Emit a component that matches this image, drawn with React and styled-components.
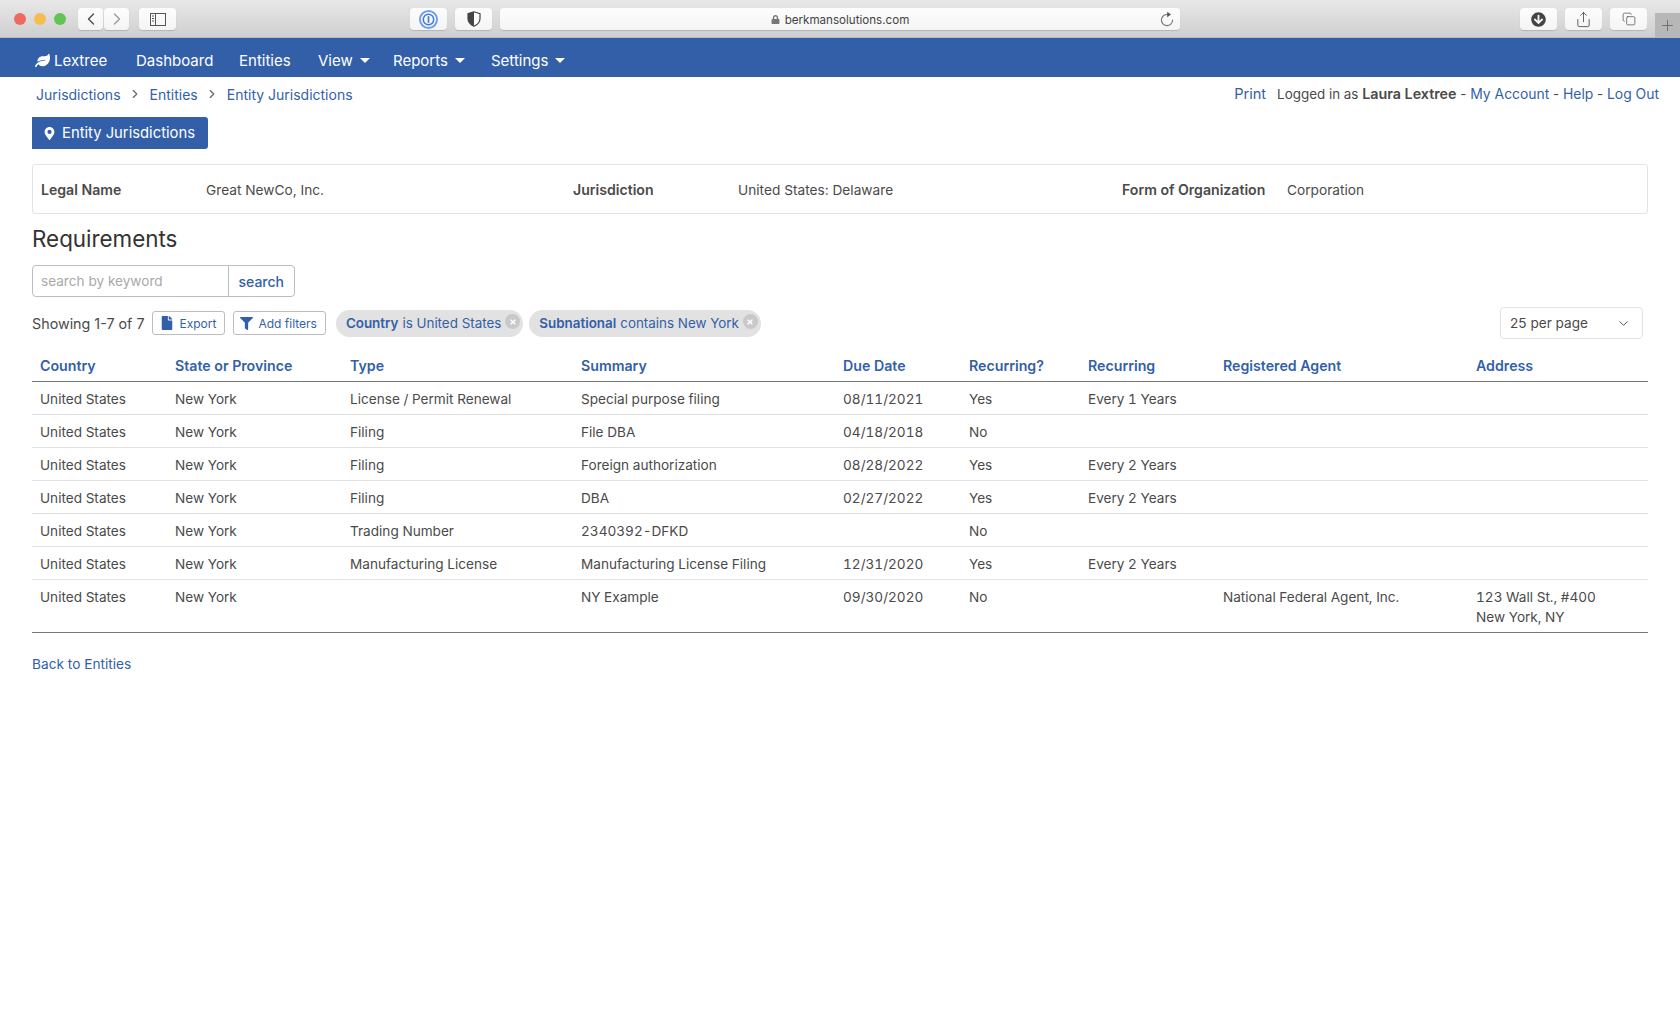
import React from 'react'
import styled, { createGlobalStyle } from 'styled-components'
import { FaLeaf, FaMapMarkerAlt, FaFile, FaFilter, FaLock, FaArrowCircleDown, FaTimes } from 'react-icons/fa'
import { ChevronLeft, ChevronRight, ChevronDown, Share, Copy, Plus } from 'lucide-react'

const BLUE = '#335fa9'
const TEXT = '#4a4a4a'

const GlobalStyle = createGlobalStyle`
  html, body { margin: 0; background: #fff; }
  body {
    font-family: Inter, "Liberation Sans", sans-serif;
    font-size: 13.6px;
    color: ${TEXT};
  }
  a { color: ${BLUE}; text-decoration: none; }
`

const rows = [
  ['United States', 'New York', 'License / Permit Renewal', 'Special purpose filing', '08/11/2021', 'Yes', 'Every 1 Years', '', ''],
  ['United States', 'New York', 'Filing', 'File DBA', '04/18/2018', 'No', '', '', ''],
  ['United States', 'New York', 'Filing', 'Foreign authorization', '08/28/2022', 'Yes', 'Every 2 Years', '', ''],
  ['United States', 'New York', 'Filing', 'DBA', '02/27/2022', 'Yes', 'Every 2 Years', '', ''],
  ['United States', 'New York', 'Trading Number', '2340392-DFKD', '', 'No', '', '', ''],
  ['United States', 'New York', 'Manufacturing License', 'Manufacturing License Filing', '12/31/2020', 'Yes', 'Every 2 Years', '', ''],
  ['United States', 'New York', '', 'NY Example', '09/30/2020', 'No', '', 'National Federal Agent, Inc.', <>123 Wall St., #400<br />New York, NY</>],
]

const columns = [
  ['Country', 135], ['State or Province', 175], ['Type', 231], ['Summary', 262], ['Due Date', 126],
  ['Recurring?', 119], ['Recurring', 135], ['Registered Agent', 253], ['Address', 180],
]

const Chrome = styled.div`
  height: 38px;
  box-sizing: border-box;
  display: flex;
  align-items: flex-start;
  padding: 8px 0 0 14px;
  background: linear-gradient(#e8e8e8, #cfcfcf);
  border-bottom: 1px solid #b9b9b9;
`
const Light = styled.span`
  width: 12px;
  height: 12px;
  border-radius: 50%;
  margin: 5px 8px 0 0;
  background: ${p => p.$color};
`
const ChromeBtn = styled.div`
  width: ${p => p.$w || 37}px;
  height: 22px;
  margin-left: ${p => p.$ml || 0}px;
  flex: ${p => (p.$grow ? 1 : 'none')};
  display: flex;
  align-items: center;
  justify-content: center;
  background: linear-gradient(#fdfdfd, #f4f4f4);
  border-radius: 4px;
  box-shadow: 0 1px 1px rgba(0, 0, 0, 0.15);
  color: ${p => p.$color || '#4a4a4a'};
`
const UrlBar = styled(ChromeBtn)`
  position: relative;
  box-sizing: border-box;
  padding-top: 1px;
  font-size: 11.6px;
  gap: 5px;
  color: #444;
`
const Reload = styled.span`
  position: absolute;
  right: 6px;
  top: 3px;
  display: flex;
`
const NewTab = styled.div`
  width: 25px;
  height: 25px;
  margin: 5px 0 0 8px;
  background: #b7b7b7;
  display: flex;
  align-items: center;
  justify-content: center;
  color: #666;
`

const Nav = styled.nav`
  height: 39px;
  box-sizing: border-box;
  background: ${BLUE};
  display: flex;
  align-items: center;
  padding: 5px 0 0 35px;
  color: #fff;
  font-size: 15px;
`
const Brand = styled.span`
  display: flex;
  align-items: center;
  gap: 4px;
  width: 101px;
`
const NavItem = styled.span`
  display: flex;
  align-items: center;
  width: ${p => p.$w}px;
`
const Caret = styled.i`
  width: 0;
  height: 0;
  margin-left: 7px;
  border-left: 5px solid transparent;
  border-right: 5px solid transparent;
  border-top: 5px solid #fff;
`

const Page = styled.main`
  padding: 0 32px;
`
const TopRow = styled.div`
  display: flex;
  justify-content: space-between;
  align-items: center;
  height: 34px;
  margin-right: -11px;
  padding-left: 4px;
  font-size: 14px;
`
const Crumbs = styled.div`
  display: flex;
  align-items: center;
`
const Sep = styled(ChevronRight)`
  margin: 0 7.5px;
  color: #666;
`
const UserNav = styled.div`
  font-size: 13.4px;
  a { font-size: 13.9px; }
  b { font-weight: 600; font-size: 14.3px; }
`
const PrintLink = styled.a`
  margin-right: 11px;
  && { font-size: 14.6px; }
`
const TitleBadge = styled.div`
  display: inline-flex;
  align-items: center;
  gap: 6px;
  height: 32px;
  box-sizing: border-box;
  padding: 0 13px 0 11px;
  margin-top: 6px;
  background: ${BLUE};
  color: #fff;
  font-size: 14.8px;
  border-radius: 0 3px 3px 0;
`
const InfoBox = styled.section`
  display: grid;
  grid-template-columns: 165px 367px 165px 384px 165px 1fr;
  align-items: center;
  height: 50px;
  box-sizing: border-box;
  margin-top: 15px;
  padding-left: 8px;
  border: 1px solid #e3e3e3;
  border-radius: 3px;
  b { font-weight: 600; font-size: 14.1px; }
`
const InfoValue = styled.span`
  padding-top: 1px;
  font-size: 13.7px;
`
const Heading = styled.h2`
  margin: 10px 0 0;
  font-size: 22.4px;
  line-height: 30px;
  font-weight: 400;
  color: #333;
`
const SearchGroup = styled.form`
  display: flex;
  width: 263px;
  height: 32px;
  margin-top: 11px;
  box-sizing: border-box;
  border: 1px solid #bdbdbd;
  border-radius: 4px;
`
const SearchInput = styled.div`
  flex: 1;
  display: flex;
  align-items: center;
  padding-left: 8px;
  color: #a9a9a9;
  border-right: 1px solid #bdbdbd;
`
const SearchBtn = styled.div`
  display: flex;
  align-items: center;
  padding: 0 10px;
  color: ${BLUE};
  font-weight: 500;
  font-size: 14px;
`
const Toolbar = styled.div`
  display: flex;
  align-items: center;
  height: 32px;
  margin-top: 10px;
`
const CountLabel = styled.span`
  font-size: 14.3px;
`
const SmallBtn = styled.div`
  display: flex;
  align-items: center;
  gap: ${p => p.$gap}px;
  height: 24px;
  box-sizing: border-box;
  padding: 0 8px 0 ${p => p.$pl}px;
  margin-left: ${p => p.$ml}px;
  border: 1px solid #bdbdbd;
  border-radius: 3px;
  color: ${BLUE};
  font-size: 12px;
`
const Chip = styled.div`
  display: flex;
  align-items: center;
  height: 27px;
  margin-left: ${p => p.$ml}px;
  padding: 0 3px 0 10px;
  background: #e2e2e2;
  border-radius: 14px;
  color: ${BLUE};
  font-size: 13.4px;
  b { font-weight: 600; margin-right: 4px; }
`
const ChipClose = styled.span`
  width: 15px;
  height: 15px;
  margin: -3px 0 0 4px;
  border-radius: 50%;
  background: #c9c9c9;
  color: #fff;
  display: flex;
  align-items: center;
  justify-content: center;
`
const PerPage = styled.div`
  margin-left: auto;
  margin-right: 5px;
  width: 143px;
  height: 32px;
  box-sizing: border-box;
  padding: 0 11px 0 9px;
  display: flex;
  align-items: center;
  justify-content: space-between;
  border: 1px solid #e2e2e2;
  border-radius: 4px;
`
const Table = styled.table`
  width: 100%;
  table-layout: fixed;
  border-collapse: collapse;
  margin-top: 9px;
  border-bottom: 1px solid #777;
`
const Th = styled.th`
  height: 33px;
  padding: 2px 8px 0;
  box-sizing: border-box;
  text-align: left;
  font-weight: 600;
  font-size: 14.2px;
  color: ${BLUE};
  border-bottom: 1px solid #777;
`
const Td = styled.td`
  padding: 7px 8px 0;
  height: 33px;
  box-sizing: border-box;
  vertical-align: top;
  line-height: 20px;
  font-variant-numeric: tabular-nums;
  border-bottom: 1px solid #e2e2e2;
  tr:last-child & { border-bottom: 0; padding-bottom: 5px; }
`
const BackLink = styled.a`
  display: block;
  margin-top: 23px;
  font-size: 13.7px;
`

const OnePassword = () => (
  <svg width="19" height="19" viewBox="0 0 20 20" fill="none">
    <circle cx="10" cy="10" r="9" stroke="#6f9df0" strokeWidth="2" />
    <circle cx="10" cy="10" r="5.5" stroke="#3f78e0" strokeWidth="1.6" />
    <rect x="9.1" y="6.5" width="1.8" height="7" fill="#3f78e0" />
  </svg>
)

const HalfShield = () => (
  <svg width="14" height="16" viewBox="0 0 14 16">
    <path d="M7 .8 1 2.6v5c0 3.6 2.6 6.2 6 7.6 3.4-1.4 6-4 6-7.6v-5z" fill="#fff" stroke="#444" strokeWidth="1.2" />
    <path d="M7 .8 1 2.6v5c0 3.6 2.6 6.2 6 7.6z" fill="#444" />
  </svg>
)

const ReloadIcon = () => (
  <svg width="14" height="16" viewBox="0 0 14 16" fill="none">
    <path d="M8.2 3.6A5.6 5.6 0 1 0 12.6 9" stroke="#777" strokeWidth="1.1" strokeLinecap="round" />
    <path d="M7.2 .8 11 3.6 7.2 6.2z" fill="#555" />
  </svg>
)

const App = () => (
  <>
    <GlobalStyle />
    <Chrome>
      <Light $color="#ee6a5f" />
      <Light $color="#f5bd4f" />
      <Light $color="#61c454" />
      <ChromeBtn $w={25} $ml={4}><ChevronLeft size={20} strokeWidth={1.6} /></ChromeBtn>
      <ChromeBtn $w={25} $ml={1} $color="#999"><ChevronRight size={20} strokeWidth={1.6} /></ChromeBtn>
      <ChromeBtn $ml={10}>
        <svg width="16" height="13" viewBox="0 0 16 13" fill="none" stroke="#555">
          <rect x=".5" y=".5" width="15" height="12" />
          <path d="M5.5 .5v12" />
          <path d="M2 3h2M2 5.5h2M2 8h2" />
        </svg>
      </ChromeBtn>
      <ChromeBtn $ml={234}><OnePassword /></ChromeBtn>
      <ChromeBtn $ml={8}><HalfShield /></ChromeBtn>
      <UrlBar $ml={8} $grow>
        <FaLock size={9} color="#777" />
        berkmansolutions.com
        <Reload><ReloadIcon /></Reload>
      </UrlBar>
      <ChromeBtn $ml={340}><FaArrowCircleDown size={15} color="#444" /></ChromeBtn>
      <ChromeBtn $ml={8}><Share size={17} strokeWidth={1.2} /></ChromeBtn>
      <ChromeBtn $ml={8}><Copy size={14} strokeWidth={1.2} /></ChromeBtn>
      <NewTab><Plus size={17} strokeWidth={1.2} /></NewTab>
    </Chrome>
    <Nav>
      <Brand><FaLeaf size={15} />Lextree</Brand>
      <NavItem $w={103}>Dashboard</NavItem>
      <NavItem $w={79}>Entities</NavItem>
      <NavItem $w={75}>View<Caret /></NavItem>
      <NavItem $w={98}>Reports<Caret /></NavItem>
      <NavItem $w={90}>Settings<Caret /></NavItem>
    </Nav>
    <Page>
      <TopRow>
        <Crumbs>
          <a href="#j">Jurisdictions</a>
          <Sep size={14} />
          <a href="#e">Entities</a>
          <Sep size={14} />
          <a href="#ej">Entity Jurisdictions</a>
        </Crumbs>
        <UserNav>
          <PrintLink href="#p">Print</PrintLink>
          Logged in as <b>Laura Lextree</b> - <a href="#a">My Account</a> - <a href="#h">Help</a> - <a href="#l">Log Out</a>
        </UserNav>
      </TopRow>
      <TitleBadge><FaMapMarkerAlt size={13} />Entity Jurisdictions</TitleBadge>
      <InfoBox>
        <b>Legal Name</b>
        <InfoValue>Great NewCo, Inc.</InfoValue>
        <b>Jurisdiction</b>
        <InfoValue>United States: Delaware</InfoValue>
        <b>Form of Organization</b>
        <InfoValue>Corporation</InfoValue>
      </InfoBox>
      <Heading>Requirements</Heading>
      <SearchGroup>
        <SearchInput>search by keyword</SearchInput>
        <SearchBtn>search</SearchBtn>
      </SearchGroup>
      <Toolbar>
        <CountLabel>Showing 1-7 of 7</CountLabel>
        <SmallBtn $ml={7} $pl={7} $gap={6}><FaFile size={14} />Export</SmallBtn>
        <SmallBtn $ml={8} $pl={6} $gap={5}><FaFilter size={13} />Add filters</SmallBtn>
        <Chip $ml={10}><b>Country</b>is United States<ChipClose><FaTimes size={8} /></ChipClose></Chip>
        <Chip $ml={6}><b>Subnational</b>contains New York<ChipClose><FaTimes size={8} /></ChipClose></Chip>
        <PerPage>25 per page<ChevronDown size={15} strokeWidth={1.5} /></PerPage>
      </Toolbar>
      <Table>
        <colgroup>
          {columns.map(([name, w]) => <col key={name} width={w} />)}
        </colgroup>
        <thead>
          <tr>{columns.map(([name]) => <Th key={name}>{name}</Th>)}</tr>
        </thead>
        <tbody>
          {rows.map((row, i) => (
            <tr key={i}>{row.map((cell, j) => <Td key={j}>{cell}</Td>)}</tr>
          ))}
        </tbody>
      </Table>
      <BackLink href="#b">Back to Entities</BackLink>
    </Page>
  </>
)

export default App
